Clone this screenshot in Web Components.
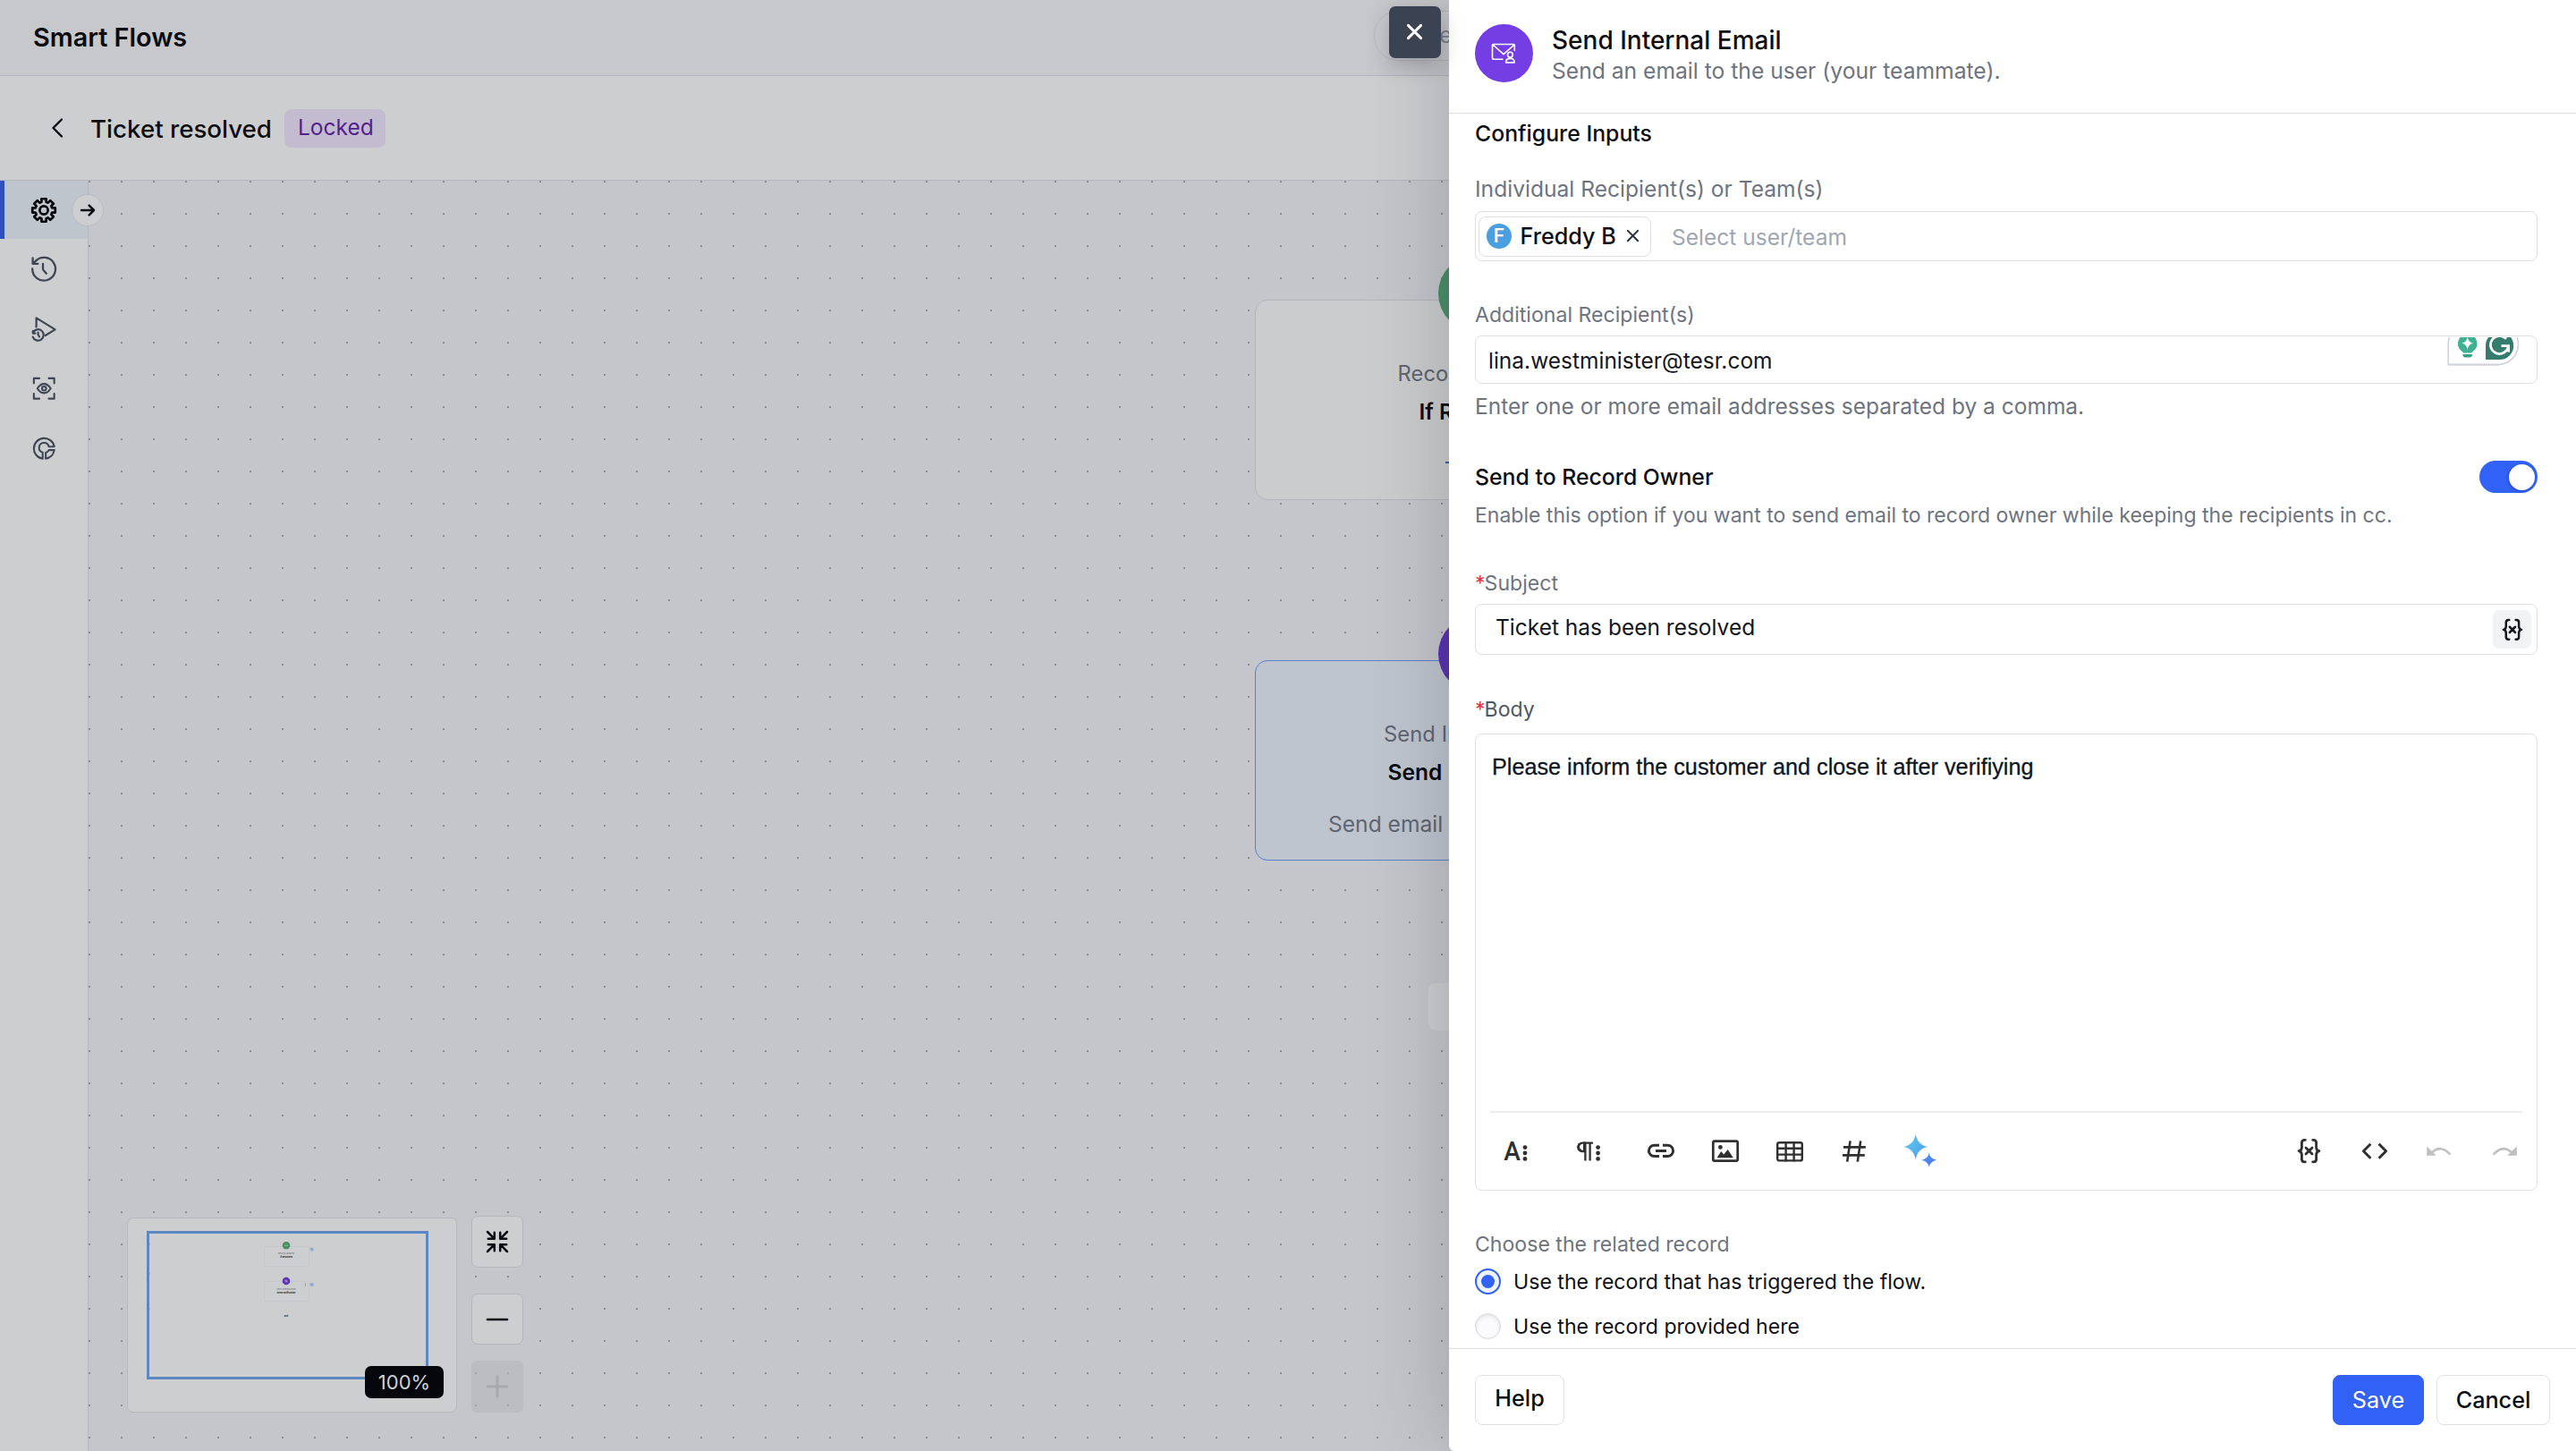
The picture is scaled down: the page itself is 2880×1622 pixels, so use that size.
<!DOCTYPE html>
<html lang="en">
<head>
<meta charset="utf-8">
<title>Smart Flows</title>
<style>
html,body{margin:0;padding:0;width:2880px;height:1622px;overflow:hidden;background:#c5c6cb;font-family:Inter,"Liberation Sans",sans-serif;color:#0b0d13}
</style>
</head>
<body>
<flow-app></flow-app>
<script>
const define = (name, html, setup) => {
  const t = document.createElement('template');
  t.innerHTML = html;
  customElements.define(name, class extends HTMLElement {
    connectedCallback() {
      if (this.shadowRoot) return;
      const root = this.attachShadow({ mode: 'open' });
      root.append(t.content.cloneNode(true));
      if (setup) setup.call(this, root);
    }
  });
};

/* ---------- icons ---------- */
const gear = () => {
  let d = '';
  for (let i = 0; i < 8; i++) {
    const c = i * Math.PI / 4;
    [[-0.27, 9.6], [-0.2, 13], [0.2, 13], [0.27, 9.6]].forEach(([a, r], j) => {
      const x = 15 + r * Math.sin(c + a), y = 15 - r * Math.cos(c + a);
      d += (i + j ? 'L' : 'M') + x.toFixed(2) + ' ' + y.toFixed(2);
    });
  }
  return `<path d="${d}Z"/><circle cx="15" cy="15" r="4.6"/>`;
};
const brace = '<path d="M9 2.2H8.2Q5.2 2.2 5.2 5.2V10Q5.2 13.4 2 14Q5.2 14.6 5.2 18V22.8Q5.2 25.8 8.2 25.8H9M17 2.2H17.8Q20.8 2.2 20.8 5.2V10Q20.8 13.4 24 14Q20.8 14.6 20.8 18V22.8Q20.8 25.8 17.8 25.8H17M9.6 10.6L16.4 17.4M16.4 10.6L9.6 17.4"/>';
const ICONS = {
  gear: [30, 30, gear(), 2.7],
  history: [30, 30, '<path d="M2.2 14.5A12.9 12.9 0 1 0 6 5.6L3 8.6M2.6 2.5V8.8H8.4M14 9V14.2Q14 15.4 15 16.6L17.8 19.8"/>', 2.3],
  runs: [30, 30, '<path d="M6.6 12.5V2.4L27.6 15.4L16.8 22M2.8 17.2V19.6H5.4M3 18.6A6.2 6.2 0 1 1 2.7 23.6M8.6 18.6V21L10 23.4"/>', 2.2],
  view: [30, 30, '<path d="M3 9V3H9.5M20.5 3H27V9M27 21V27H20.5M9.5 27H3V21M7.2 15Q10.4 9.6 15 9.6T22.8 15Q19.6 20.4 15 20.4T7.2 15Z"/><circle cx="15" cy="15" r="2.4"/>', 2.2],
  goal: [30, 30, '<path d="M27 12.8A12.1 12.1 0 1 0 13.4 27.1V19.8A5.8 5.8 0 1 1 20.6 12.9H27M27 17H20.6A5.8 5.8 0 0 1 17 20V27.1A12.1 12.1 0 0 0 27 17"/>', 2.2],
  right: [18, 18, '<path d="M2 9H16M10.6 3.6L16 9L10.6 14.4"/>', 2.5],
  back: [16, 24, '<path d="M13 2.5L3.5 12L13 21.5"/>', 2.4],
  close: [20, 20, '<path d="M2.5 2.5L17.5 17.5M17.5 2.5L2.5 17.5"/>', 3],
  x: [16, 16, '<path d="M2 2L14 14M14 2L2 14"/>', 2.2],
  shrink: [28, 28, '<path d="M3 3L10.8 10.8M3.8 10.8H10.8V3.8M25 3L17.2 10.8M17.2 3.8V10.8H24.2M3 25L10.8 17.2M3.8 17.2H10.8V24.2M25 25L17.2 17.2M24.2 17.2H17.2V24.2"/>', 2.5],
  minus: [28, 28, '<path d="M3 14H25"/>', 2.6],
  plus: [28, 28, '<path d="M3 14H25M14 3V25"/>', 2.8],
  brace: [26, 28, brace, 2.7],
  mail: [65, 65, '<path d="M31 39.3H21.4Q19.5 39.3 19.5 37.4V23.6Q19.5 22.5 20.6 22.5H43.2Q44.3 22.5 44.3 23.6V29.5M20 23L32 33.6L44 23"/><circle cx="39.4" cy="34.2" r="2.9"/><path d="M34.6 42.9Q34.6 38.4 39.4 38.4T44.2 42.9Z"/>', 1.6],
  letter: [36, 36, '<text x="4.2" y="28.4" textLength="18.6" lengthAdjust="spacingAndGlyphs" font-family="Roboto" font-weight="500" font-size="29.5" fill="currentColor" stroke="none">A</text><g fill="currentColor" stroke="none"><circle cx="28" cy="13.6" r="2.4"/><circle cx="28" cy="20" r="2.4"/><circle cx="28" cy="26.4" r="2.4"/></g>', 0],
  para: [36, 36, '<path d="M23 8.6H12M14.4 8V28.5M19.6 8V28.5" stroke-linecap="butt"/><path d="M15 7.4H11A5.9 5.9 0 0 0 11 19.2H14Z" fill="currentColor" stroke="none"/><path d="M10.8 9.8H12V16.8H10.8Q8 15.6 8 13.2T10.8 9.8" fill="#fff" stroke="none"/><g fill="currentColor" stroke="none"><circle cx="28.6" cy="13.6" r="2.4"/><circle cx="28.6" cy="20" r="2.4"/><circle cx="28.6" cy="26.4" r="2.4"/></g>', 2.3],
  link: [36, 36, '<path d="M16 11.2H10.6A6.2 6.2 0 0 0 10.6 23.6H16M20 11.2H25.4A6.2 6.2 0 0 1 25.4 23.6H20M12 17.4H24" stroke-linecap="butt"/>', 3],
  image: [36, 36, '<rect x="4.3" y="6.7" width="27.4" height="22" rx="1.6"/><path d="M8.5 25.3L13.2 18L16.2 21.6L20.7 16L26.8 25.3Z" fill="currentColor" stroke="none"/><circle cx="12.4" cy="13.4" r="2.4" fill="currentColor" stroke="none"/>', 2.7],
  table: [36, 36, '<rect x="4.2" y="8.2" width="27.6" height="22.400" rx="2" transform="translate(0 -.4)"/><path d="M4 14.900H32M4 22.300H32M13.600 8V30M22.600 8V30"/>', 2.4],
  hash: [36, 36, '<path d="M13.6 6.4L10.2 29.6M25.2 6.4L21.8 29.6M6 13.4H30.8M5 22.4H29.8" stroke-linecap="butt"/>', 2.6],
  spark: [44, 44, '<defs><linearGradient id="a" x1="0" y1="0" x2="1" y2="1"><stop offset="0" stop-color="#5fd0ee"/><stop offset="1" stop-color="#4f97ea"/></linearGradient><linearGradient id="b" x1="0" y1="0" x2="1" y2="1"><stop offset="0" stop-color="#4f95ec"/><stop offset="1" stop-color="#4b75f2"/></linearGradient></defs><path d="M16.700 2.600Q18.700 15.200 30.600 17Q18.700 18.800 16.700 31.600Q14.700 18.800 2.800 17Q14.700 15.200 16.700 2.600Z" fill="url(#a)" stroke="none"/><path d="M31.700 23.800Q32.900 30.600 40.200 31.800Q32.900 33 31.700 39.900Q30.500 33 23.200 31.800Q30.500 30.600 31.700 23.800Z" fill="url(#b)" stroke="none"/>', 0],
  code: [36, 36, '<path d="M13.4 9.8L5.4 17.8L13.4 25.8M22.6 9.8L30.6 17.8L22.6 25.8" stroke-linecap="butt"/>', 3],
  undo: [36, 36, '<path d="M9.6 19.6Q20 9.8 30.4 21.6" stroke-linecap="butt"/><path d="M4.2 12.4V22.8H14.8Z" fill="currentColor" stroke="none"/>', 2.6],
  redo: [36, 36, '<path d="M26.4 19.6Q16 9.8 5.6 21.6" stroke-linecap="butt"/><path d="M31.8 12.4V22.8H21.2Z" fill="currentColor" stroke="none"/>', 2.6]
};
ICONS.table[2] = '<rect x="4.2" y="8.2" width="27.6" height="20.2" rx="2"/><path d="M4 14.8H32M4 21.6H32M13.6 8V28.4M22.6 8V28.4"/>';
define('ui-icon', '<style>:host{display:inline-flex;flex:none}svg{display:block;overflow:visible}</style>', function (root) {
  const [w, h, body, sw] = ICONS[this.getAttribute('name')];
  const s = +(this.getAttribute('scale') || 1);
  const holder = document.createElement('template');
  holder.innerHTML = `<svg width="${w * s}" height="${h * s}" viewBox="0 0 ${w} ${h}" fill="none" stroke="currentColor" stroke-width="${sw}" stroke-linecap="round" stroke-linejoin="round">${body}</svg>`;
  root.append(holder.content);
});

/* ---------- page bars ---------- */
define('top-bar', `<style>
:host{display:flex;align-items:center;height:84px;border-bottom:1px solid #b4b6bf;background:#c7c8cc;padding-left:37px}
h1{margin:0;font-size:28.8px;line-height:84px;font-weight:600;color:#0b0c11}
.search{box-sizing:border-box;margin-left:auto;margin-right:1024px;width:320px;height:56px;margin-top:-4px;border:1.5px solid #b8b9be;border-radius:28px;background:#cacbce;padding-left:56px;font-size:25px;line-height:53px;color:#85878f}
</style><h1><slot></slot></h1><div class="search">Search</div>`);

define('sub-bar', `<style>
:host{display:flex;align-items:center;height:116px;border-bottom:1px solid #b4b6bb;background:#cdced0;padding-left:56px}
h2{margin:2px 0 0 29px;font-size:27.7px;line-height:34px;font-weight:500;color:#0d0e12;width:217px;white-space:nowrap}
.tag{height:43px;border-radius:8px;background:#c3bbcf;color:#541f8d;font-size:24.5px;line-height:41px;padding:0 15px;width:83px;white-space:nowrap;margin-top:1px}
</style><ui-icon name="back"></ui-icon><h2><slot></slot></h2><div class="tag"><slot name="tag"></slot></div>`);

define('side-item', `<style>
:host{display:flex;align-items:center;justify-content:center;height:67px;color:#3f4653;box-sizing:border-box}
:host([active]){height:65px;background:#bfc5cd;color:#07080c;border-left:5px solid #2f50bd;padding-right:5px}
</style><slot></slot>`);

define('side-nav', `<style>
:host{display:block;position:relative;z-index:1;width:98px;border-right:1px solid #b6b8bd;background:#cdced0}
.toggle{position:absolute;left:80px;top:15px;width:34px;height:34px;border:1.5px solid #b8babf;border-radius:50%;background:#cdced0;display:flex;align-items:center;justify-content:center}
</style>
<side-item active><ui-icon name="gear"></ui-icon></side-item>
<side-item><ui-icon name="history"></ui-icon></side-item>
<side-item><ui-icon name="runs"></ui-icon></side-item>
<side-item><ui-icon name="view" scale=".95"></ui-icon></side-item>
<side-item><ui-icon name="goal" scale=".95"></ui-icon></side-item>
<div class="toggle"><ui-icon name="right"></ui-icon></div>`);

/* ---------- canvas ---------- */
define('flow-node', `<style>
:host{display:block;position:absolute;box-sizing:border-box;width:500px;height:224px;border:1.5px solid #b4b5b9;border-radius:14px;background:#cbcccd;text-align:left;white-space:nowrap}
:host([selected]){background:#bfc5cf;border-color:#5a80cb}
.dot{position:absolute;left:204px;top:-51px;width:86px;height:86px;border-radius:50%;background:var(--dot)}
.c{position:relative;display:flex;flex-direction:column}
.type{margin:65px 0 0 var(--tx);font-size:23.7px;line-height:34px;color:#5f6571;letter-spacing:.1px}
.name{margin:7px 0 0 var(--nx);font-size:24.6px;line-height:36px;font-weight:600}
.desc{margin:24px 0 0 var(--dx);font-size:24.6px;line-height:32px;color:#5f6571}
</style><div class="dot"></div><div class="c"><div class="type"><slot name="type"></slot></div><div class="name"><slot></slot></div><div class="desc"><slot name="desc"></slot></div></div>`);

define('mini-map', `<style>
:host{display:block;box-sizing:border-box;width:369px;height:218px;border:1.5px solid #b6b8be;border-radius:7px;background:#cdced0;padding:14px 0 0 21px;position:relative}
.view{box-sizing:border-box;width:315px;height:166px;border:3px solid #5b88c2}
svg{display:block}
.zoom{position:absolute;right:14px;bottom:15px;width:88px;height:36px;border-radius:7px;background:#06070c;color:#cfd0d3;font-size:22px;line-height:36px;text-align:center}
</style><div class="view"><svg width="309" height="160" viewBox="0 0 309 160" font-family="Inter" text-anchor="middle">
<g fill="none" stroke="#c4c5c8" stroke-width=".8"><rect x="128.5" y="14.5" width="50" height="22" rx="1.5"/><rect x="128.5" y="53.5" width="50" height="22" rx="1.5"/></g>
<circle cx="153" cy="13.3" r="4.3" fill="#4b9069"/><circle cx="153" cy="53" r="4.3" fill="#5f35b5"/>
<path d="M151.4 13.3h3.2M153 51.6v2.8M151.6 52.2l2.8 1.6" stroke="#c2c9c9" stroke-width=".8"/>
<g fill="#9fb3da"><rect x="179.6" y="15.6" width="4" height="4"/><rect x="179.6" y="55" width="4" height="4"/></g>
<g fill="#7a93cf"><rect x="180.8" y="16.8" width="1.6" height="1.6"/><rect x="180.8" y="56.2" width="1.6" height="1.6"/></g>
<g font-size="2.4" fill="#6b6e75"><text x="153" y="23.2">Record updated</text><text x="153" y="63">Send Internal Email</text></g>
<g font-size="2.5" font-weight="700" fill="#15161a"><text x="153" y="27.2">If Resolved</text><text x="153" y="67">Send notification</text><text x="153" y="93.2">Exit</text></g>
<path d="M174.4 55.4v3.4" stroke="#8b8d92" stroke-width=".8"/><path d="M.6 10v3M.6 43.5v2M.6 83v2" stroke="#a9abb0" stroke-width=".8"/>
</svg></div><div class="zoom">100%</div>`);

define('zoom-controls', `<style>
:host{display:flex;flex-direction:column}
div{box-sizing:border-box;width:58px;height:58px;border:1.5px solid #b4b6bc;border-radius:7px;background:#cdced0;display:flex;align-items:center;justify-content:center}
.m{margin-top:29px;height:57px}.p{margin-top:18px;background:rgba(178,182,188,.55);border-color:transparent;color:#a6a9ae}
</style><div><ui-icon name="shrink"></ui-icon></div><div class="m"><ui-icon name="minus"></ui-icon></div><div class="p"><ui-icon name="plus"></ui-icon></div>`);

define('flow-canvas', `<style>
:host{display:block;position:relative;flex:1;overflow:hidden;background:#c5c6cb}
.bg{position:absolute;inset:0;background:conic-gradient(from 0deg at 2px 2px,transparent 75%,#8d8e93 0) 0 0/36px 36px}
.a{left:1304px;top:133px;--dot:#4c8f69;--tx:158.5px;--nx:182.5px;--dx:209px}
.b{left:1304px;top:536px;--dot:#5a34b0;--tx:143px;--nx:147.5px;--dx:81px}
.lnk{display:inline-block;width:20px;height:2px;background:#3b5fae;vertical-align:9px;margin-left:3px}
.exit{position:absolute;left:1498px;top:897px;width:108px;height:53px;border-radius:8px;background:#cdced0}
.dock{position:absolute;left:43px;top:1157px;display:flex;gap:16px;align-items:flex-start}
mini-map{margin-top:2px}
</style><div class="bg"></div>
<flow-node class="a"><span slot="type">Recor</span>If R<span slot="desc"><i class="lnk"></i></span></flow-node>
<flow-node class="b" selected><span slot="type">Send In</span>Send<span slot="desc">Send email</span></flow-node>
<div class="exit"></div>
<div class="dock"><mini-map></mini-map><zoom-controls></zoom-controls></div>`);

/* ---------- form parts ---------- */
define('field-label', `<style>
:host{display:block;font-size:23.1px;line-height:30px;color:#6d7480;white-space:nowrap}
:host([large]){font-size:24.6px;line-height:32px}
b{font-weight:400;color:#dc3545;letter-spacing:-1px}
:host(:not([required])) b{display:none}
</style><b>*</b><slot></slot>`);

define('text-box', `<style>
:host{display:flex;align-items:center;box-sizing:border-box;width:1188px;border:1.5px solid #dedfe6;border-radius:8px;background:#fff;font-size:24.5px;line-height:32px;color:#14161c;white-space:nowrap}
</style><slot></slot>`);

define('user-chip', `<style>
:host{display:flex;align-items:center;box-sizing:border-box;width:193px;height:45px;margin-left:3px;border:1.5px solid #dedfe4;border-radius:8px;padding-left:8px;font-size:25.2px;color:#0c0e14}
.av{width:28px;height:28px;border-radius:50%;background:#4a9fe0;color:#fff;font-size:21px;font-weight:600;line-height:28px;text-align:center;margin-right:9.5px;flex:none}
.n{font-weight:500;margin-top:-1px;width:118px}ui-icon{color:#2c323d}
</style><div class="av">F</div><div class="n"><slot></slot></div><ui-icon name="x" scale=".94"></ui-icon>`);

define('writing-helper', `<style>:host{display:block;margin:1px 18px 0 auto;align-self:flex-start}svg{display:block}</style>
<svg width="82" height="33" viewBox="0 15 82 33" fill="none">
<path d="M1.2 45.4V23A22.5 22.5 0 0 1 23.7.5H57A22.4 22.4 0 0 1 57 45.4Z" fill="#fff" stroke="#cfd2de" stroke-width="1.6"/>
<path d="M1 46.3H58" stroke="#d9dbe4" stroke-width="1"/>
<path d="M22.7 11.4A10.6 10.6 0 0 0 16.2 30.4Q18 31.8 18.2 32.4H27.2Q27.4 31.8 29.2 30.4A10.6 10.6 0 0 0 22.7 11.4Z" fill="#3fb093"/>
<path d="M22.7 15Q23.7 20.5 28.9 21.7Q23.7 22.9 22.7 28.4Q21.7 22.9 16.5 21.7Q21.7 20.5 22.7 15Z" fill="#fff"/>
<path d="M17.4 33.9H28V34.6Q27.6 37.6 25.4 37.6H20Q17.8 37.6 17.4 34.6Z" fill="#3a9e86"/>
<path d="M43 40V24.5A15.6 15.6 0 1 1 58.6 40Z" fill="#367c6e"/>
<path d="M66 17.5A10 10 0 1 0 68.4 25.3H60.5M68.6 24V32" stroke="#fff" stroke-width="2.8" transform="translate(0 -.6)"/>
</svg>`);

define('toggle-switch', `<style>:host{display:block;box-sizing:border-box;width:65px;height:36px;border-radius:18px;background:#3261f5;margin-left:auto;padding:3.5px 0 0 33px}
i{display:block;width:29px;height:29px;border-radius:50%;background:#fff;box-shadow:-1px 1px 3px rgba(10,30,110,.35)}</style><i></i>`);

define('radio-row', `<style>
:host{display:flex;align-items:center;height:30px;font-size:23.12px;line-height:30px;color:#0f1116;white-space:nowrap}
i{box-sizing:border-box;width:29px;height:29px;border-radius:50%;border:1.5px solid #d3d6dc;background:#fbfbfd;box-shadow:inset 0 2px 4px rgba(0,0,0,.10);margin-right:14px;display:flex;align-items:center;justify-content:center}
span{padding-top:1px}
:host([checked]) i{border:2px solid #3261f5;background:#eef3ff;box-shadow:none}
:host([checked]) i::after{content:"";width:15px;height:15px;border-radius:50%;background:#3261f5}
</style><i></i><span><slot></slot></span>`);

define('ui-button', `<style>
:host{display:flex;align-items:center;justify-content:center;box-sizing:border-box;height:56px;border:1.5px solid #dfe0e7;border-radius:8px;font-size:25.2px;font-weight:500;color:#0b0d13;background:#fff}
:host([primary]){background:#3261f5;border-color:#3261f5;color:#fff;font-weight:400}
</style><slot></slot>`);

define('rich-editor', `<style>
:host{display:flex;flex-direction:column;box-sizing:border-box;width:1188px;height:511px;border:1.5px solid #dedfe8;border-radius:8px}
.text{flex:1;padding:21px 18px 0;font:25.22px/30px "Liberation Sans",Arial,sans-serif;color:#0f1722;-webkit-text-stroke:.3px #0f1722}
.bar{display:flex;align-items:center;height:86px;margin:0 16px 0 16px;border-top:2px solid #ededee;padding:0 2px 0 11px;color:#303031}
.bar>*{margin-left:36px}
.bar>:first-child{margin-left:0}
</style><div class="text"><slot></slot></div>
<div class="bar"><ui-icon name="letter"></ui-icon><ui-icon name="para" style="margin-left:45px"></ui-icon><ui-icon name="link" style="margin-left:45px"></ui-icon><ui-icon name="image"></ui-icon><ui-icon name="table"></ui-icon><ui-icon name="hash"></ui-icon><ui-icon name="spark" style="margin-left:34px"></ui-icon>
<ui-icon name="brace" scale="1.04" style="margin-left:auto"></ui-icon><ui-icon name="code" style="margin-left:42px"></ui-icon><ui-icon name="undo" style="color:#bfbfbf"></ui-icon><ui-icon name="redo" style="color:#bfbfbf;margin-left:37px"></ui-icon></div>`);

/* ---------- drawer ---------- */
define('email-drawer', `<style>
:host{display:flex;flex-direction:column;background:#fff;border-bottom-left-radius:6px;box-shadow:0 0 96px rgba(10,12,20,.2)}
header{display:flex;box-sizing:border-box;height:127px;padding:27px 0 0 29px;border-bottom:1.5px solid #dcdde3}
.ic{width:65px;height:65px;border-radius:50%;background:#753de4;color:#fff;margin-right:21px}
h2{margin:1px 0 -1px;font-size:28px;line-height:35px;font-weight:500}
header p{margin:0;font-size:24.65px;line-height:34px;color:#6d7480;white-space:nowrap}
main{height:1380px;box-sizing:border-box;padding:5px 0 0 29px}
h3{margin:0;font-size:24.8px;line-height:34px;font-weight:500}
.hint{font-size:24.5px;line-height:32px;color:#6d7480;margin-top:9px}
.row{display:flex;align-items:center;width:1188px;height:36px;margin-top:45px}
.desc{font-size:23px;line-height:30px;color:#6d7480;margin-top:10px;white-space:nowrap}
.ph{color:#a0a6b1;margin:2px 0 0 23px;font-size:24.55px}
.var{display:flex;align-items:center;justify-content:center;width:43px;height:43px;border-radius:7px;background:#f2f3f5;margin:0 6px 0 auto}
footer{display:flex;box-sizing:border-box;flex:1;border-top:1.5px solid #dedfe4;padding:29px 29px 0 29px}
</style>
<header><div class="ic"><ui-icon name="mail"></ui-icon></div><div><h2>Send Internal Email</h2><p>Send an email to the user (your teammate).</p></div></header>
<main>
<h3>Configure Inputs</h3>
<field-label large style="margin-top:29px">Individual Recipient(s) or Team(s)</field-label>
<text-box style="height:56px;margin-top:9px"><user-chip>Freddy B</user-chip><span class="ph">Select user/team</span></text-box>
<field-label style="margin-top:45px">Additional Recipient(s)</field-label>
<text-box style="height:54px;margin-top:8px"><span style="margin:1px 0 0 14px">lina.westminister@tesr.com</span><writing-helper></writing-helper></text-box>
<div class="hint">Enter one or more email addresses separated by a comma.</div>
<div class="row"><h3>Send to Record Owner</h3><toggle-switch></toggle-switch></div>
<div class="desc">Enable this option if you want to send email to record owner while keeping the recipients in cc.</div>
<field-label required style="margin-top:46px">Subject</field-label>
<text-box style="height:57px;margin-top:8px"><span style="margin:-5px 0 0 22px">Ticket has been resolved</span><span class="var"><ui-icon name="brace" scale=".92"></ui-icon></span></text-box>
<field-label required style="margin-top:46px;color:#4e5766">Body</field-label>
<rich-editor style="margin-top:12px">Please inform the customer and close it after verifiying</rich-editor>
<field-label style="margin-top:45px">Choose the related record</field-label>
<radio-row checked style="margin-top:11px">Use the record that has triggered the flow.</radio-row>
<radio-row style="margin-top:20px">Use the record provided here</radio-row>
</main>
<footer><ui-button style="width:100px;padding-bottom:4px">Help</ui-button><ui-button primary style="width:102px;margin-left:auto">Save</ui-button><ui-button style="width:127px;margin-left:14px">Cancel</ui-button></footer>`);

define('flow-app', `<style>
:host{display:flex;flex-direction:column;position:relative;width:2880px;height:1622px;overflow:hidden}
.work{display:flex;flex:1;min-height:0}
email-drawer{position:absolute;right:0;top:0;width:1260px;height:1622px;z-index:3}
.close{position:absolute;left:1553px;top:7px;width:58px;height:58px;border-radius:7px;background:#3b4251;color:#fff;display:flex;align-items:center;justify-content:center;z-index:4;box-shadow:0 8px 24px rgba(20,24,36,.22)}
.close ui-icon{margin:-1px 1px 0 0}
</style>
<top-bar>Smart Flows</top-bar>
<sub-bar>Ticket resolved<span slot="tag">Locked</span></sub-bar>
<div class="work"><side-nav></side-nav><flow-canvas></flow-canvas></div>
<email-drawer></email-drawer>
<div class="close"><ui-icon name="close" scale=".95"></ui-icon></div>`);
</script>
</body>
</html>
